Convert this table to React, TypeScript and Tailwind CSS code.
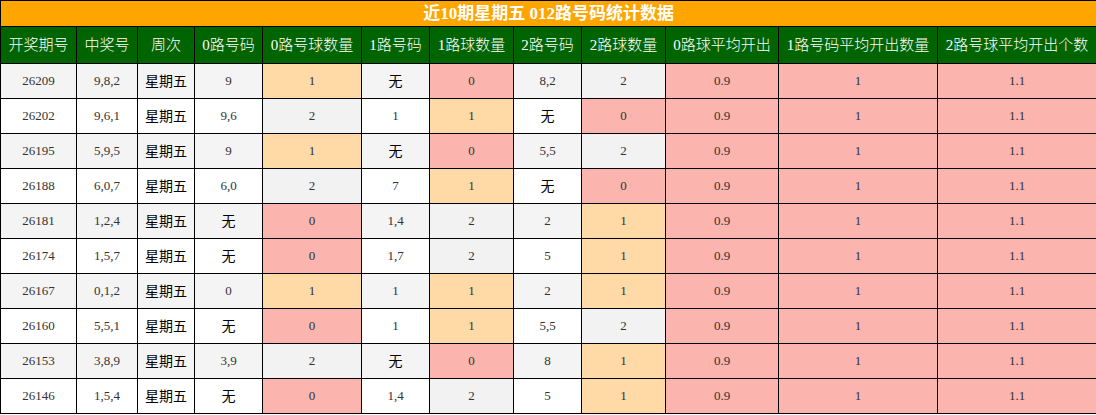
import React from 'react';

type Row = {
  issue: string;
  win: string;
  r0: string;
  c0: number;
  r1: string;
  c1: number;
  r2: string;
  c2: number;
};

const rows: Row[] = [
  { issue: '26209', win: '9,8,2', r0: '9', c0: 1, r1: '无', c1: 0, r2: '8,2', c2: 2 },
  { issue: '26202', win: '9,6,1', r0: '9,6', c0: 2, r1: '1', c1: 1, r2: '无', c2: 0 },
  { issue: '26195', win: '5,9,5', r0: '9', c0: 1, r1: '无', c1: 0, r2: '5,5', c2: 2 },
  { issue: '26188', win: '6,0,7', r0: '6,0', c0: 2, r1: '7', c1: 1, r2: '无', c2: 0 },
  { issue: '26181', win: '1,2,4', r0: '无', c0: 0, r1: '1,4', c1: 2, r2: '2', c2: 1 },
  { issue: '26174', win: '1,5,7', r0: '无', c0: 0, r1: '1,7', c1: 2, r2: '5', c2: 1 },
  { issue: '26167', win: '0,1,2', r0: '0', c0: 1, r1: '1', c1: 1, r2: '2', c2: 1 },
  { issue: '26160', win: '5,5,1', r0: '无', c0: 0, r1: '1', c1: 1, r2: '5,5', c2: 2 },
  { issue: '26153', win: '3,8,9', r0: '3,9', c0: 2, r1: '无', c1: 0, r2: '8', c2: 1 },
  { issue: '26146', win: '1,5,4', r0: '无', c0: 0, r1: '1,4', c1: 2, r2: '5', c2: 1 },
];

const headers = [
  '开奖期号',
  '中奖号',
  '周次',
  '0路号码',
  '0路号球数量',
  '1路号码',
  '1路球数量',
  '2路号码',
  '2路球数量',
  '0路球平均开出',
  '1路号码平均开出数量',
  '2路号球平均开出个数',
];

const widths = [76, 61, 57, 68, 99, 68, 84, 68, 84, 113, 159, 159];

// count cells are tinted by value
const countBg = (n: number) => {
  if (n === 0) return 'bg-[#fbb4ae]';
  if (n === 1) return 'bg-[#ffdaa6]';
  return 'bg-[#f2f2f2]';
};

const cell = 'border border-black text-center align-middle h-[35px] p-0';

const App: React.FC = () => {
  return (
    <div className="w-[1096px] bg-white font-['Liberation_Serif','Noto_Sans_CJK_SC',serif]">
      <table className="w-[1096px] table-fixed border-collapse border border-black text-[13px] text-[#333]">
        <colgroup>
          {widths.map((w, i) => (
            <col key={i} style={{ width: w }} />
          ))}
        </colgroup>
        <thead>
          <tr>
            <th
              colSpan={12}
              className="border border-black bg-[#ffa500] h-[26px] p-0 text-center text-[17px] font-bold text-white leading-none"
            >
              近10期星期五 012路号码统计数据
            </th>
          </tr>
          <tr>
            {headers.map((h) => (
              <th
                key={h}
                className="border border-black bg-[#006400] h-[37px] p-0 text-center text-[15px] font-light text-white whitespace-nowrap"
              >
                {h}
              </th>
            ))}
          </tr>
        </thead>
        <tbody>
          {rows.map((r, i) => {
            const rowBg = i % 2 === 0 ? 'bg-[#f4f4f4]' : 'bg-white';
            const none = (v: string) => (v === '无' ? 'text-[14px] text-black' : '');
            return (
              <tr key={r.issue} className={rowBg}>
                <td className={cell}>{r.issue}</td>
                <td className={cell}>{r.win}</td>
                <td className={`${cell} text-[14px] text-black`}>星期五</td>
                <td className={`${cell} ${none(r.r0)}`}>{r.r0}</td>
                <td className={`${cell} ${countBg(r.c0)}`}>{r.c0}</td>
                <td className={`${cell} ${none(r.r1)}`}>{r.r1}</td>
                <td className={`${cell} ${countBg(r.c1)}`}>{r.c1}</td>
                <td className={`${cell} ${none(r.r2)}`}>{r.r2}</td>
                <td className={`${cell} ${countBg(r.c2)}`}>{r.c2}</td>
                <td className={`${cell} bg-[#fbb4ae]`}>0.9</td>
                <td className={`${cell} bg-[#fbb4ae]`}>1</td>
                <td className={`${cell} bg-[#fbb4ae]`}>1.1</td>
              </tr>
            );
          })}
        </tbody>
      </table>
    </div>
  );
};

export default App;
